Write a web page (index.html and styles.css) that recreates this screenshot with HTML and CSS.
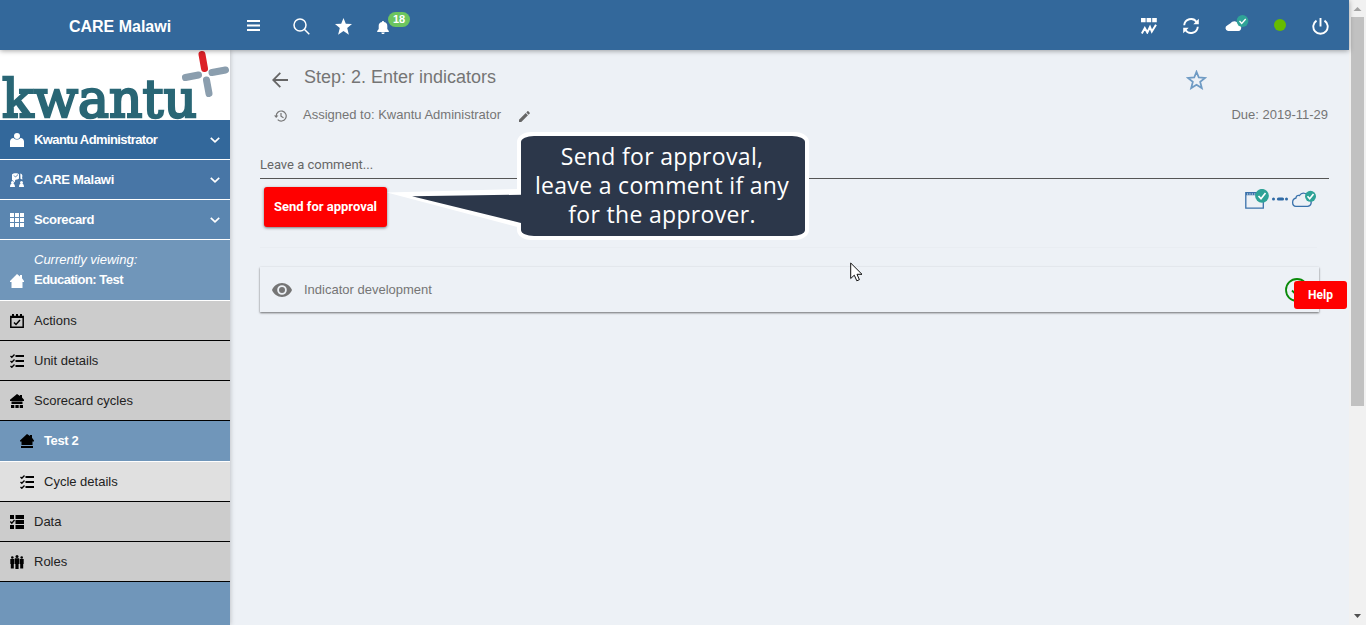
FILE: index.html
```html
<!DOCTYPE html>
<html lang="en">
<head>
  <meta charset="UTF-8" />
  <meta name="viewport" content="width=device-width, initial-scale=1.0"/>
  <title>CARE Malawi</title>
  <link rel="stylesheet" href="styles.css">
</head>
<body>

  <div class="app">
    <header>
      <h2>CARE Malawi</h2>
      <nav class="nav-left">
        <svg class="i-menu" width="13" height="11" viewBox="0 0 13 11"><path d="M0 1h13M0 5.500h13M0 10h13" stroke="#fff" stroke-width="2"/></svg>
        <svg class="i-search" width="17" height="17" viewBox="0 0 17 17" fill="none" stroke="#fff" stroke-width="1.5"><circle cx="7" cy="7" r="6"/><path d="M11.3 11.3l5 5"/></svg>
        <svg class="i-star" width="17" height="17" viewBox="0 0 17 17"><path fill="#fff" d="M8.500 0l2.300 5.800 6.200.3-4.800 3.900 1.700 6.700-5.400-3.700-5.400 3.700L4.800 10 0 6.100l6.200-.3z"/></svg>
        <div class="bell">
          <svg width="12" height="13" viewBox="0 0 12 13" fill="#fff"><path d="M6 0c.7 0 1 .4 1 1 2.500.500 3.300 2 3.300 4v3l1.500 2v1H.2v-1l1.500-2V5c0-2 .8-3.500 3.300-4 0-.6.300-1 1-1z"/><path d="M4.300 11.500h3.400C7.500 12.500 7 13 6 13s-1.500-.5-1.700-1.500z"/></svg>
          <span class="badge">18</span>
        </div>
      </nav>
      <nav class="nav-right">
        <svg class="i-chart" width="16" height="16" viewBox="0 0 16 16"><path fill="#fff" d="M0 0h4.600v4.300H0zM5.600 0h4.600v4.300H5.600zM11.200 0h4.600v4.300h-4.600z"/><path d="M.8 15.500l3-5.500 2.500 4.500L9 9l1.800 4.500L15 6.800" fill="none" stroke="#fff" stroke-width="2"/></svg>
        <svg class="i-sync" width="16" height="16" viewBox="0 0 16 16" fill="none" stroke="#fff" stroke-width="1.900"><path d="M1.200 7.300A6.800 6.800 0 0 1 13.600 4M14.800 8.700A6.800 6.800 0 0 1 2.400 12"/><path d="M15.800.8v5.500h-5.500zM.2 15.200V9.700h5.500z" fill="#fff" stroke="none"/></svg>
        <svg class="i-cloud" width="24" height="17" viewBox="0 0 24 17"><path fill="#fff" d="M3 16a3 3 0 0 1-.5-5.800C3.500 9.800 4.500 9 5.500 8.300 7.500 5.300 12 5.500 13.500 9c3.800.5 3.500 7 0 7z"/><circle cx="17.500" cy="6" r="5.900" fill="#2fa397"/><path d="M14.500 6l2.200 2.500 4-4.500" fill="none" stroke="#fff" stroke-width="1.300"/></svg>
        <span class="dot"></span>
        <svg class="i-power" width="17" height="17" viewBox="0 0 17 17" fill="none" stroke="#fff" stroke-width="1.900"><path d="M4.500 2.600a7.200 7.200 0 1 0 8 0M8.500 0v8.500"/></svg>
      </nav>
    </header>

    <div class="content">
      <aside>
        <div class="logo">
          <svg width="230" height="70" viewBox="0 0 230 70">
            <text x="2" y="67" textLength="195" lengthAdjust="spacingAndGlyphs">kwantu</text>
            <g stroke-width="7" stroke-linecap="round">
              <path d="M202 4.500l2.500 14" stroke="#dc2128"/>
              <path d="M185.500 27.500l13-2.500M212 22.500l13.500-2.500M206.500 30l2.500 13.500" stroke="#8b9eae"/>
            </g>
          </svg>
        </div>

        <div class="item user">
          <svg width="14" height="14" viewBox="0 0 14 14"><circle cx="7" cy="3" r="3" fill="#fff"/><path fill="#fff" d="M0 14V8.500c0-2 1.500-3.300 3.500-3.500 2 2 5 2 7 0C12.500 5.200 14 6.500 14 8.500V14z"/></svg>
          <span>Kwantu Administrator</span>
          <svg class="chev" width="10" height="6" viewBox="0 0 10 6"><path d="M.8.800L5 4.800 9.200.800" fill="none" stroke="#fff" stroke-width="1.700"/></svg>
        </div>
        <div class="item org">
          <svg width="14" height="14" viewBox="0 0 14 14" fill="#fff"><path d="M2 1.500C3-.2 8.500-.2 9 1.500v4C8 7 5.500 6 5 7.500v2L3.500 8 2 7z"/><path d="M10.300.5c2 .5 2.500 2 1.800 4l.4 2-2-.5zM0 14c0-2.500 1-3.500 2.500-3.500S5 11.500 5 14zM9 14c0-2.500 1-3.500 2.500-3.500S14 11.500 14 14z"/><path d="M4 2.500l1.500 1.500L8 1.600" fill="none" stroke="#4876a6" stroke-width=".9"/><circle cx="2.500" cy="9.500" r="1.500"/><circle cx="11.500" cy="9.500" r="1.500"/></svg>
          <span>CARE Malawi</span>
          <svg class="chev" width="10" height="6" viewBox="0 0 10 6"><path d="M.8.800L5 4.800 9.200.800" fill="none" stroke="#fff" stroke-width="1.700"/></svg>
        </div>
        <div class="item app-name">
          <svg width="14" height="14" viewBox="0 0 14 14"><path d="M0 2h14M0 7h14M0 12h14" stroke="#fff" stroke-width="4" stroke-dasharray="4 1"/></svg>
          <span>Scorecard</span>
          <svg class="chev" width="10" height="6" viewBox="0 0 10 6"><path d="M.8.800L5 4.800 9.200.800" fill="none" stroke="#fff" stroke-width="1.700"/></svg>
        </div>
        <div class="item viewing">
          <svg width="14" height="14" viewBox="0 0 14 14"><path fill="#fff" d="M7 0l3 2.500V1h2v3.200L14 7v1h-1.500v6h-11V8H0V7z"/></svg>
          <div><em>Currently viewing:</em><span>Education: Test</span></div>
        </div>

        <div class="item link">
          <svg width="14" height="14" viewBox="0 0 14 14"><path d="M.8 2.500h12.400v10.700H.8z" fill="none" stroke="#000" stroke-width="1.500"/><path d="M1 2h12v2H1zM2 0h2v3H2zM6 0h2v3H6zM10 0h2v3h-2z"/><path d="M4 8.500l2 2L10 6" fill="none" stroke="#000" stroke-width="1.500"/></svg>
          <span>Actions</span>
        </div>
        <div class="item link">
          <svg width="14" height="14" viewBox="0 0 14 14" fill="none" stroke="#000"><path d="M5.500 2H14M5.500 7H14M5.500 12H14" stroke-width="2"/><path d="M.5 2l1.300 1.300L4.500.5M.5 7l1.300 1.300L4.500 5.500M.5 12l1.300 1.300 2.700-2.800" stroke-width="1.300"/></svg>
          <span>Unit details</span>
        </div>
        <div class="item link">
          <svg width="14" height="14" viewBox="0 0 14 14"><path d="M7 0l3 2V1h2v2.500l2 2.300V7H0V5.800zM1.500 7.500h11V10h-11zM1 11h3.300v3H1zM5.400 11h3.300v3H5.400zM9.700 11H13v3H9.700z"/></svg>
          <span>Scorecard cycles</span>
        </div>
        <div class="item sub active">
          <svg width="14" height="14" viewBox="0 0 14 14"><path d="M7 0l3 2V1h2v2.700L14 6.500V7.500h-1.500V11h-11V7.500H0v-1zM1 12h12v2H1z"/></svg>
          <span>Test 2</span>
        </div>
        <div class="item sub">
          <svg width="14" height="14" viewBox="0 0 14 14" fill="none" stroke="#000"><path d="M5.500 2H14M5.500 7H14M5.500 12H14" stroke-width="2"/><path d="M.5 2l1.300 1.300L4.500.5M.5 7l1.300 1.300L4.500 5.500M.5 12l1.300 1.300 2.700-2.800" stroke-width="1.300"/></svg>
          <span>Cycle details</span>
        </div>
        <div class="item link">
          <svg width="14" height="14" viewBox="0 0 14 14"><path d="M0 0h4v4H0zM5.500 0H14v4H5.500zM5.500 5H14v4H5.500zM0 10h4v4H0zM5.500 10H14v4H5.500z"/><path d="M.3 6.500l1.500 1.700L4.500 5" fill="none" stroke="#000" stroke-width="1.300"/></svg>
          <span>Data</span>
        </div>
        <div class="item link">
          <svg width="14" height="14" viewBox="0 0 14 14"><circle cx="7" cy="1.500" r="1.500"/><circle cx="2.300" cy="2.500" r="1.300"/><circle cx="11.700" cy="2.500" r="1.300"/><path d="M4.800 3.300h4.400V9H8.600v5H5.400V9h-.6zM.3 4h4v5h-.5v4.500h-3V9H.3zM9.700 4h4v5h-.5v4.500h-3V9h-.5z"/></svg>
          <span>Roles</span>
        </div>
      </aside>

      <main>
        <div class="title-row">
          <svg width="16" height="16" viewBox="0 0 16 16" fill="none" stroke="#666" stroke-width="1.800"><path d="M16 8H1.500M8.300.8L1.200 8l7.100 7.200"/></svg>
          <h1>Step: 2. Enter indicators</h1>
          <svg class="fav" width="21" height="20" viewBox="0 0 21 20"><path d="M10.500 1.800l2.300 5.700 6.200.4-4.800 4 1.600 6.200-5.300-3.400-5.300 3.400 1.600-6.200-4.800-4 6.200-.4z" fill="none" stroke="#6f9bc4" stroke-width="1.800"/></svg>
        </div>

        <div class="assign-row">
          <svg width="13" height="12" viewBox="0 0 13 12" fill="none" stroke="#757575" stroke-width="1.200"><path d="M2.200 6a5 5 0 1 1 1.500 3.600M7 3v3.200l2.500 1.500"/><path d="M0 5.500h4.400L2.200 8z" fill="#757575" stroke="none"/></svg>
          <p>Assigned to: Kwantu Administrator</p>
          <svg class="pencil" width="11" height="11" viewBox="0 0 12 12" fill="#666"><path d="M0 12V9.500L7.300 2.200l2.500 2.500L2.500 12zM8 1.500L9.200.300c.3-.3.700-.3 1 0l1.500 1.500c.3.300.3.700 0 1L10.500 4z"/></svg>
          <p class="due">Due: 2019-11-29</p>
        </div>

        <div class="comment">Leave a comment...</div>

        <div class="send-row">
          <button>Send for approval</button>
          <svg width="72" height="21" viewBox="0 0 72 21">
            <g fill="none" stroke="#3a72ab" stroke-width="1.300">
              <path d="M.8 3.600h17.500v15.600H.8z"/>
              <path d="M1 5h16" stroke-width="2.500"/>
              <path d="M51 17.300h11.500c4 0 5-5.300 1.800-7.300C64 4 57 2.500 54.500 6.500c-2-.5-3.300.5-3.500 2.500-4.500 1-4.500 8 0 8.300z"/>
            </g>
            <path d="M2 5h9" stroke="#edf1f6" stroke-width="1" stroke-dasharray="1.200 1.200"/>
            <path d="M33.500 10h4" stroke="#2f6aa5" stroke-width="3.200" stroke-linecap="round"/>
            <circle cx="28.500" cy="10" r="1.500" fill="#2f6aa5"/><circle cx="41.500" cy="10" r="1.500" fill="#2f6aa5"/>
            <circle cx="17" cy="6.800" r="6.900" fill="#2fa397"/><circle cx="65.500" cy="7.300" r="5.500" fill="#2fa397"/>
            <path d="M13.500 7l2.500 2.700L20.500 4M62.500 7.300l2.200 2.400L68.500 5" fill="none" stroke="#fff" stroke-width="1.700"/>
          </svg>
        </div>

        <div class="card">
          <svg width="20" height="14" viewBox="0 0 20 14"><path fill="#757575" fill-rule="evenodd" d="M10 0c4.500 0 8.400 2.900 10 7-1.600 4.100-5.500 7-10 7S1.600 11.100 0 7c1.600-4.100 5.500-7 10-7zm0 2.200a4.800 4.800 0 1 0 0 9.600 4.800 4.800 0 0 0 0-9.600z"/><circle cx="10" cy="7" r="3" fill="#757575"/></svg>
          <span>Indicator development</span>
          <svg class="done" width="24" height="24" viewBox="0 0 24 24" fill="none" stroke="#0a8a0a" stroke-width="1.800"><circle cx="12" cy="12" r="11"/><path d="M7 12.500l3.500 3.500 7-7.500"/></svg>
        </div>

        <button class="help">Help</button>

        <div class="callout">
          <svg width="422" height="110" viewBox="0 0 422 110">
            <path fill="#fff" d="M0 61.500L134 58v39z"/>
            <rect x="130" y="1" width="292" height="108" rx="14" ry="10" fill="#fff"/>
            <rect x="134" y="5" width="284" height="100" rx="13" ry="6" fill="#2c374a"/>
            <path fill="#2c374a" d="M25 65.200l110-1.500v28.500z"/>
          </svg>
          <p>Send for approval,<br>leave a comment if any<br>for the approver.</p>
        </div>

        <svg class="cursor" width="13" height="20" viewBox="0 0 13 20"><path d="M.7 1v15.500l3.600-3.300 2.500 5.600 2.600-1.100L7 12.300h5z" fill="#fff" stroke="#111" stroke-width="1"/></svg>
      </main>
    </div>
  </div>

  <div class="scrollbar">
    <svg width="17" height="17" viewBox="0 0 17 17"><path fill="#a3a3a3" d="M4.500 11h8l-4-4z"/></svg>
    <div class="thumb"></div>
    <svg width="17" height="17" viewBox="0 0 17 17"><path fill="#505050" d="M5 6h7l-3.500 4z"/></svg>
  </div>

</body>
</html>
```
FILE: styles.css
```css
:root {
  --primary: #33689b;
  --light-blue: #7096ba;
  --bg: #edf1f6;
  --grey: #757575;
  --red: #ff0000;
}

* {
  box-sizing: border-box;
  margin: 0;
  padding: 0;
}

body {
  display: flex;
  height: 100vh;
  overflow: hidden;
  font-family: "Liberation Sans", Arial, sans-serif;
  font-size: 13px;
  background: var(--bg);
}

svg {
  display: block;
  flex-shrink: 0;
}

.app {
  flex: 1;
  display: flex;
  flex-direction: column;
}

/* HEADER */
header {
  display: flex;
  align-items: center;
  height: 50px;
  padding-right: 20px;
  background: var(--primary);
  box-shadow: 0 1px 5px rgba(0, 0, 0, 0.35);
  position: relative;
  z-index: 2;
  color: #fff;
}

header h2 {
  width: 240px;
  padding-top: 3px;
  text-align: center;
  font-size: 16px;
}

nav {
  display: flex;
  align-items: center;
}

.nav-left {
  margin-left: 7px;
}

.i-search {
  margin-left: 33px;
  margin-top: 2px;
}

.i-star {
  margin-left: 25px;
  margin-top: 2px;
}

.bell {
  margin: 4px 0 0 25px;
  position: relative;
}

.badge {
  position: absolute;
  left: 11px;
  top: -9px;
  width: 22px;
  height: 15px;
  border-radius: 8px;
  background: #6cc55f;
  font-size: 11px;
  font-weight: bold;
  line-height: 15px;
  text-align: center;
}

.nav-right {
  margin-left: auto;
}

.i-chart {
  margin-top: 2px;
}

.i-sync {
  margin: 2px 0 0 26px;
}

.i-cloud {
  margin: -3px 0 0 26px;
}

.dot {
  width: 12px;
  height: 12px;
  margin-left: 25px;
  border-radius: 50%;
  background: #66bb00;
}

.i-power {
  margin: 2px 0 0 26px;
}

.content {
  flex: 1;
  display: flex;
}

/* SIDEBAR */
aside {
  width: 230px;
  background: var(--light-blue);
  box-shadow: 0 0 5px rgba(0, 0, 0, 0.25);
}

.logo {
  height: 70px;
  background: #fff;
}

.logo svg {
  overflow: visible;
}

.logo text {
  font-family: "DejaVu Serif", serif;
  font-size: 53px;
  fill: #296675;
  stroke: #296675;
  stroke-width: 2.4px;
}

.item {
  display: flex;
  align-items: center;
  height: 40px;
  padding: 0 10px;
  border-bottom: 1px solid #fff;
  color: #fff;
}

.item > svg:first-child {
  margin: 1px 10px 0 0;
}

.item .chev {
  margin-left: auto;
  margin-top: 1px;
}

.user,
.org,
.app-name,
.viewing span,
.active {
  font-weight: bold;
  letter-spacing: -0.4px;
}

.org {
  letter-spacing: -0.28px;
}

.user {
  background: var(--primary);
  letter-spacing: -0.6px;
}

.org {
  background: #4876a6;
}

.app-name {
  background: #5b86b0;
}

.viewing {
  height: 61px;
}

.viewing > svg:first-child {
  margin-top: 22px;
}

.viewing em,
.viewing span {
  display: block;
  line-height: 20px;
}

.viewing span {
  letter-spacing: -0.5px;
}

.link {
  background: #ccc;
  border-color: #000;
  color: #222;
}

.sub {
  padding-left: 20px;
  background: #e0e0e0;
  border-color: #000;
  color: #222;
}

.sub.active {
  height: 41px;
  padding-bottom: 1px;
  background: var(--light-blue);
  border-color: #fff;
  color: #fff;
}

/* MAIN */
main {
  flex: 1;
  position: relative;
  padding: 15px 20px 0 30px;
  color: var(--grey);
}

.title-row {
  display: flex;
  align-items: center;
  height: 26px;
  padding-left: 12px;
}

.title-row > svg {
  margin-top: 4px;
}

h1 {
  margin-left: 16px;
  padding-bottom: 2px;
  font-size: 18px;
  font-weight: normal;
}

.title-row .fav {
  margin: 3px 122px 0 auto;
}

.assign-row {
  display: flex;
  align-items: center;
  height: 20px;
  margin-top: 13px;
  padding-left: 14px;
}

.assign-row > svg {
  margin-top: 3px;
}

.assign-row p {
  margin-left: 16px;
  font-size: 13px;
}

.assign-row .pencil {
  margin: 4px 0 0 18px;
}

.assign-row .due {
  margin-left: auto;
  margin-right: 1px;
}

.comment {
  height: 28px;
  margin-top: 27px;
  border-bottom: 1px solid #555;
  font-family: Roboto, sans-serif;
  line-height: 27px;
  color: #666;
}

.send-row {
  display: flex;
  align-items: flex-start;
  justify-content: space-between;
  height: 69px;
  margin-right: 12px;
  padding: 8px 0 0 4px;
  border-bottom: 1px solid #e9edf2;
}

.send-row svg {
  margin-top: 2px;
}

button {
  border: none;
  border-radius: 3px;
  background: var(--red);
  color: #fff;
  font-family: Roboto, sans-serif;
  font-weight: bold;
  cursor: pointer;
}

.send-row button {
  width: 123px;
  height: 40px;
  padding-bottom: 2px;
  font-size: 13px;
  box-shadow: 0 1px 3px rgba(0, 0, 0, 0.5);
}

.card {
  display: flex;
  align-items: center;
  height: 45px;
  margin: 19px 10px 0 0;
  padding: 0 10px 0 12px;
  box-shadow: 0 1px 2px rgba(0, 0, 0, 0.55);
}

.card span {
  margin-left: 12px;
}

.done {
  margin-left: auto;
}

.help {
  position: absolute;
  right: 2px;
  top: 231px;
  width: 53px;
  height: 28px;
  font-size: 12px;
}

/* CALLOUT */
.callout {
  position: absolute;
  left: 157px;
  top: 81px;
}

.callout p {
  position: absolute;
  left: 134px;
  top: 11px;
  width: 282px;
  text-align: center;
  font-family: "Open Sans", sans-serif;
  font-size: 23px;
  letter-spacing: 0.32px;
  line-height: 29px;
  white-space: nowrap;
  color: #fff;
}

.cursor {
  position: absolute;
  left: 620px;
  top: 212px;
}

/* SCROLLBAR */
.scrollbar {
  display: flex;
  flex-direction: column;
  width: 17px;
  background: #f1f1f1;
}

.thumb {
  width: 13px;
  height: 389px;
  margin: 0 2px auto;
  background: #c1c1c1;
}
```
